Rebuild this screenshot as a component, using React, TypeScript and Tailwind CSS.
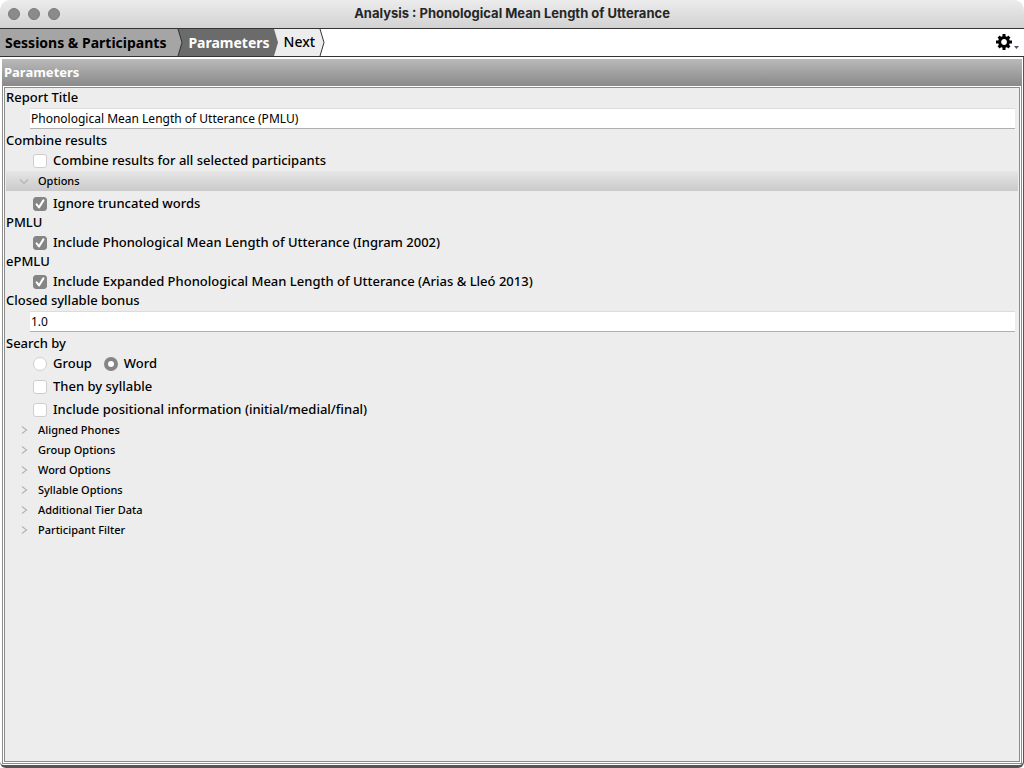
import { useState } from "react";
import type { ReactNode } from "react";

const sections = [
  "Aligned Phones",
  "Group Options",
  "Word Options",
  "Syllable Options",
  "Additional Tier Data",
  "Participant Filter",
];

const Label = ({ children, htmlFor }: { children: ReactNode; htmlFor?: string }) => (
  <label htmlFor={htmlFor} className="block h-[17px] leading-[17px]">
    {children}
  </label>
);

const TextField = ({ id, value }: { id: string; value: string }) => (
  <input
    id={id}
    type="text"
    defaultValue={value}
    className="mt-[2px] mr-[3px] mb-[3px] ml-6 h-[21px] border border-x-0 border-[#dcdcdc] border-b-[#b0b0b0] bg-white px-px text-[12px] font-normal outline-none"
  />
);

const Check = ({ children, checked = false }: { children: ReactNode; checked?: boolean }) => (
  <label className="flex h-[22px] items-center pt-px pl-[27px]">
    <span className="relative mr-[6px] flex size-[14px]">
      <input
        type="checkbox"
        defaultChecked={checked}
        className="peer size-[14px] appearance-none rounded-[3px] border border-[#cecece] bg-white checked:border-[#858585] checked:bg-[#858585]"
      />
      <svg
        viewBox="0 0 14 14"
        className="pointer-events-none absolute inset-0 hidden size-[14px] peer-checked:block"
        fill="none"
        stroke="white"
        strokeWidth="2"
        strokeLinecap="round"
        strokeLinejoin="round"
      >
        <path d="M3.6 7.4 6 10.4 10.4 3.4" />
      </svg>
    </span>
    {children}
  </label>
);

const Radio = ({ children, checked = false }: { children: ReactNode; checked?: boolean }) => (
  <label className="flex items-center">
    <input
      type="radio"
      name="search-by"
      defaultChecked={checked}
      className="mr-[6px] size-[14px] appearance-none rounded-full border border-[#cecece] bg-white checked:border-4 checked:border-[#858585]"
    />
    {children}
  </label>
);

const SectionHeader = ({ title, initial = false }: { title: string; initial?: boolean }) => {
  const [open, setOpen] = useState(initial);
  return (
    <button
      type="button"
      aria-expanded={open}
      onClick={() => setOpen(!open)}
      className={`flex h-5 w-full items-center pl-[13px] text-[11px] ${
        open ? "bg-linear-to-b from-[#e6e6e6] to-[#cacaca]" : ""
      }`}
    >
      <svg viewBox="0 0 10 10" className="mr-[9px] size-[10px]" fill="none" stroke="#b4b4b4" strokeWidth="1.2">
        <path d={open ? "M1 3.5 5 7.5 9 3.5" : "M3 1.5 7.5 5 3 8.5"} />
      </svg>
      {title}
    </button>
  );
};

const App = () => {
  return (
    <div className="flex min-h-screen flex-col bg-white font-['Noto_Sans','Open_Sans',sans-serif] text-[13px] font-medium text-black">
      <header className="flex h-7 items-center rounded-t-[10px] bg-linear-to-b from-[#ececec] to-[#d2d2d2] px-2">
        <div className="flex flex-1 gap-2">
          <button type="button" aria-label="Close" className="size-3 rounded-full border border-[#7c7c7c] bg-[#8a8a8a]" />
          <button type="button" aria-label="Minimize" className="size-3 rounded-full border border-[#7c7c7c] bg-[#8a8a8a]" />
          <button type="button" aria-label="Zoom" className="size-3 rounded-full border border-[#7c7c7c] bg-[#8a8a8a]" />
        </div>
        <h1 className="font-['Inter',sans-serif] text-[13px] font-bold text-[#262626]">
          Analysis : Phonological Mean Length of Utterance
        </h1>
        <div className="flex-1" />
      </header>

      <nav className="flex h-[29px] items-stretch border-y border-[#333333] bg-white">
        <a href="#sessions" className="flex items-center bg-[#a5a5a5] pr-[6px] pl-[5px] text-[14px] font-bold">
          Sessions &amp; Participants
        </a>
        <svg viewBox="0 0 11 27" className="h-[27px] w-[11px]">
          <path d="M0 0H11V27H0Z" fill="#6b6b6b" />
          <path d="M0 0H6L10 13.5 6 27H0Z" fill="#a5a5a5" />
          <path d="M6 0 10 13.5 6 27" fill="none" stroke="#333" />
        </svg>
        <a href="#parameters" className="flex items-center bg-[#6b6b6b] pl-[5px] text-[14px] font-bold text-white">
          Parameters
        </a>
        <svg viewBox="0 0 9 27" className="h-[27px] w-[9px]">
          <path d="M0 0H9V27H0Z" fill="#ededed" />
          <path d="M0 0H4L8 13.5 4 27H0Z" fill="#6b6b6b" />
        </svg>
        <button type="button" className="bg-[#ededed] pb-[2px] pl-[5px] text-[14px]">
          Next
        </button>
        <svg viewBox="0 0 11 27" className="h-[27px] w-[11px]">
          <path d="M0 0H5L9 13.5 5 27H0Z" fill="#ededed" />
          <path d="M5 0 9 13.5 5 27" fill="none" stroke="#333" />
        </svg>
        <button type="button" aria-label="Settings" className="ml-auto flex items-center pr-1 pb-[2px]">
          <svg viewBox="0 0 24 16" className="h-4 w-6">
            <g stroke="black" strokeWidth="3">
              <path d="M8 0V16M0 8H16M2.6 2.6 13.4 13.4M13.4 2.6 2.6 13.4" />
            </g>
            <circle cx="8" cy="8" r="4.4" fill="white" stroke="black" strokeWidth="3" />
            <path d="M18 12H23L20.5 15Z" fill="#4b5568" />
          </svg>
        </button>
      </nav>

      <div className="flex flex-1 rounded-b-md bg-[#555555] pr-px pb-[3px]">
        <main className="flex flex-1 flex-col rounded-b-sm bg-white pt-[2px] pr-px pb-px pl-[2px]">
          <h2 className="flex h-[26px] items-center bg-linear-to-b from-[#bababa] to-[#8b8b8b] pt-[2px] pl-[2px] font-bold text-white">
            Parameters
          </h2>
          <div className="flex flex-1 border border-[#8c8c8c] p-px">
            <form className="flex flex-1 flex-col border border-[#8c8c8c] bg-[#ededed] px-px pt-px">
              <Label htmlFor="title">Report Title</Label>
              <TextField id="title" value="Phonological Mean Length of Utterance (PMLU)" />
              <Label>Combine results</Label>
              <Check>Combine results for all selected participants</Check>
              <SectionHeader title="Options" initial />
              <div className="mt-px flex flex-col">
                <Check checked>Ignore truncated words</Check>
                <Label>PMLU</Label>
                <Check checked>Include Phonological Mean Length of Utterance (Ingram 2002)</Check>
                <Label>ePMLU</Label>
                <Check checked>Include Expanded Phonological Mean Length of Utterance (Arias &amp; Lleó 2013)</Check>
                <Label htmlFor="bonus">Closed syllable bonus</Label>
                <TextField id="bonus" value="1.0" />
                <Label>Search by</Label>
                <div className="flex flex-col gap-px">
                  <div className="flex h-[22px] gap-3 pt-px pl-[27px]">
                    <Radio>Group</Radio>
                    <Radio checked>Word</Radio>
                  </div>
                  <Check>Then by syllable</Check>
                  <Check>Include positional information (initial/medial/final)</Check>
                </div>
              </div>
              {sections.map((title) => (
                <SectionHeader key={title} title={title} />
              ))}
            </form>
          </div>
        </main>
      </div>
    </div>
  );
};

export default App;
